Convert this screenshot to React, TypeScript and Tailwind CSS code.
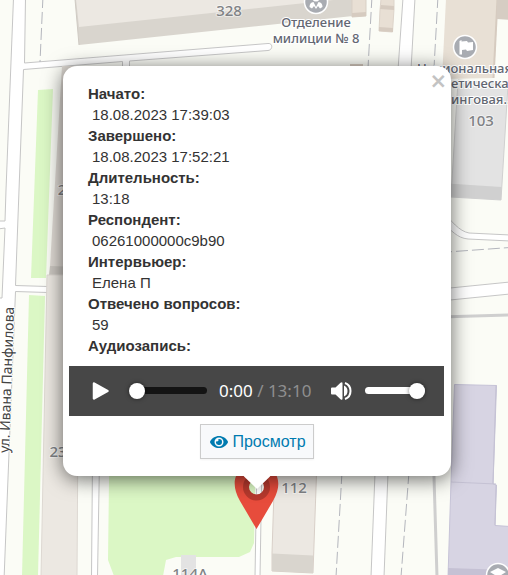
import React, { useState } from "react";
import { FaEye } from "react-icons/fa";

const details = [
  { label: 'Начато:', value: '18.08.2023 17:39:03' },
  { label: 'Завершено:', value: '18.08.2023 17:52:21' },
  { label: 'Длительность:', value: '13:18' },
  { label: 'Респондент:', value: '06261000000c9b90' },
  { label: 'Интервьюер:', value: 'Елена П' },
  { label: 'Отвечено вопросов:', value: '59' },
];

const MapTiles = () => (
  <svg className="absolute inset-0 h-full w-full" aria-label="Карта">
    {/* greenery */}
    <g fill="#dbf7c5">
      <path d="M38 90L53 89L46 278H31z" />
      <path d="M29 295L45 296L38 576H22z" />
      <path d="M110 400L108 560L114 576H163L166 560L176 557H239L250 552L254 543L257 400z" />
    </g>

    {/* roads */}
    <g fill="#fff" stroke="#c6c6c6">
      <path d="M13.500 -2L6 190L5 221L-2 221V229L5 228L2 298L-2 298V580H4L9 453L15.500 291.500L80 293.500V287.500L15.500 285.500L19 190L23.500 69.500L122.500 61.500V90H129.500V61L268 50.500C273 50 273 43 268 43.500L24.500 63L25.500 -2z" />
      <path d="M403 -2L398 70H411L415 -2z" />
      <path d="M92.500 460L91.500 577H97.500L99.500 460z" />
      <path d="M257 460L255 577H260L262 460z" />
      <path d="M375.500 460L371 577H384L388.500 460z" />
      <path d="M440 208C452 222 459 231 469 233L510 235V241L468 239C457 238 452 231 440 220z" />
      <path d="M440 289L510 282V294L440 301z" />
    </g>
    <path d="M440 317L510 315M433.500 460L437 577" stroke="#cfcfcf" strokeWidth="3" />
    <g stroke="#b4b6bd" strokeDasharray="12 4" fill="none">
      <path d="M43 -4L40 62" />
      <path d="M372 -4L368 68" />
      <path d="M438 -4L434 68" />
      <path d="M342 472L336 577" />
      <path d="M409 472L401 577" />
      <path d="M440 252.500L510 247.500" />
    </g>

    {/* buildings */}
    <path d="M75 -1L79 45L353 16V-1z" fill="#d9d5ce" />
    <path d="M76 -1L79 27L352 -2z" fill="#ece8e2" />
    <path d="M75 -1L79 45" stroke="#cfcac3" />
    <path d="M352 -1H366V16L352 17z" fill="#e8dfd4" stroke="#d8cfc5" />
    <path d="M352 13L366 12V16L352 17z" fill="#d6cbc0" />
    <path d="M381 -1H394V9L392.500 32L379 31L380 10z" fill="#e8dfd4" stroke="#ddd4ca" />
    <path d="M381 5L394 6V10L380 9zM379 27L393 28V32L379 31z" fill="#d6cbc0" />
    <path d="M350 64H363V76H350z" fill="#d6cbc0" />
    <path d="M446 -1H498L494 78L442 79z" fill="#e8e0d5" />
    <path d="M497.500 -1L493.500 78" stroke="#d6cbc0" strokeWidth="2" />
    <path d="M497 -1H510V20L497 19z" fill="#d6cdc3" />
    <path d="M458 80L508 85L501 200L451 197z" fill="#e3e3e3" stroke="#d0d0d0" />
    <path d="M440 183L501.500 187L501 200L440 196z" fill="#d0d0d0" />
    <path d="M62 66L50 266V276H80V66z" fill="#dfdad4" />
    <path d="M50 266L80 267V276L49 275z" fill="#cbc7c1" />
    <path d="M47 275H79L77 577H41z" fill="#ece8e2" stroke="#ddd8d2" />
    <path d="M181 555H196V577H181z" fill="#e3e3e3" />
    <path d="M275 460H317L313 573L272 571L272 553z" fill="#ece8e2" stroke="#d8cfc8" />
    <path d="M272 553.500L313 555.500V573L272 571z" fill="#d9d5ce" />
    <path d="M454.500 384.500L496.500 385.500L493 484L496.500 485L495 525.500L510 526.500V577H448L451 482z" fill="#d7d4e3" stroke="#c6c3d7" />
    <path d="M451 482L496 484M496 385L493 484M496 485L495 525" stroke="#c5c2d4" strokeWidth="1" />
    <path d="M448 568L510 570V577H448z" fill="#c5c1d4" />

    {/* places */}
    <g fill="#a9acb2" stroke="#fff" strokeWidth="1.500">
      <circle cx="316" cy="2" r="11.500" />
      <circle cx="465" cy="47" r="11.500" />
      <circle cx="498" cy="575" r="11.500" />
    </g>
    <g fill="#fff">
      <circle cx="316" cy="-2" r="3.500" />
      <path d="M309.500 7Q309.500 2.500 313.500 2L316 7L318.500 2Q322.500 2.500 322.500 7L320 8.500L318 6L316 9L314 6L312 8.500z" />
      <path d="M459.500 41L461.500 40V41.500L467 41L468 42.500L473 42V50L467 51L466 49.500L462 50V54.500H459.500z" />
      <path d="M490 572L498 568L506 572L498 577z" />
    </g>

    <g className="font-['Noto_Sans'] font-medium" fill="#808285" fontSize="15" textAnchor="middle" paintOrder="stroke" stroke="#ffffff80" strokeWidth="2">
      <text x="229" y="16">328</text>
      <text x="481" y="126">103</text>
      <text x="294" y="493">112</text>
      <text x="190" y="579">114А</text>
      <text x="58" y="457">23</text>
      <text x="62" y="195">2</text>
    </g>
    <g className="font-['Noto_Sans'] font-medium" fill="#636772" fontSize="13" paintOrder="stroke" stroke="#fff" strokeWidth="2">
      <text x="316" y="27" textAnchor="middle">Отделение</text>
      <text x="316" y="43" textAnchor="middle">милиции № 8</text>
      <text x="417" y="73">Национальная</text>
      <text x="451" y="88">етическая</text>
      <text x="451" y="104">инговая...</text>
    </g>
    <text className="font-['Noto_Sans']" fill="#444" fontSize="14" paintOrder="stroke" stroke="#fff" strokeWidth="2" transform="translate(9 453) rotate(-88)">ул. Ивана Панфилова</text>

    {/* marker */}
    <path
      d="M256.500 529L240 501C227 478 240 464 256.500 464S286 478 273 501zM256.500 479A8 8 0 0 0 256.500 495A8 8 0 0 0 256.500 479z"
      fill="#e74c3c"
      fillRule="evenodd"
    />
    <circle cx="256.500" cy="487" r="10.500" fill="none" stroke="#b6392d" strokeWidth="6" />
  </svg>
);

const AudioPlayer = () => {
  const [position, setPosition] = useState(0);
  const [volume, setVolume] = useState(100);
  const thumb = "appearance-none rounded-full [&::-webkit-slider-thumb]:size-4 [&::-webkit-slider-thumb]:appearance-none [&::-webkit-slider-thumb]:rounded-full [&::-webkit-slider-thumb]:bg-white [&::-webkit-slider-thumb]:shadow-[0_0_4px_#0008]";

  return (
    <div className="mr-[7px] ml-1.5 flex h-[50px] items-center bg-[#474747] pr-[19px] pb-px pl-[23px] text-white">
      <button type="button" aria-label="Воспроизвести">
        <svg className="block size-[18px]" viewBox="0 0 18 18">
          <path d="M2 1.500L15.500 9L2 16.500z" fill="currentColor" stroke="currentColor" strokeWidth="2.500" strokeLinejoin="round" />
        </svg>
      </button>
      <input
        type="range"
        aria-label="Позиция"
        className={"ml-[19px] h-[7px] w-[78px] bg-[#141414] " + thumb}
        value={position}
        onChange={e => setPosition(Number(e.target.value))}
      />
      <div className="ml-3 grow font-['Noto_Sans'] text-[17px] whitespace-nowrap">
        0:00 <span className="text-[#8f8f8f]">/ 13:10</span>
      </div>
      <button type="button" aria-label="Звук">
        <svg className="block h-[18px] w-[21px]" viewBox="0 0 21 18">
          <path d="M1 5.500H4.500L9.500 .8Q11.500 -.8 11.500 1.500V16.500Q11.500 18.800 9.500 17.200L4.500 12.500H1Q0 12.500 0 11.500V6.500Q0 5.500 1 5.500z" fill="currentColor" />
          <path d="M13 3.500V14.500Q16.500 13 16.500 9T13 3.500z" fill="currentColor" />
          <path d="M14 1Q19.500 3 19.500 9T14 17" fill="none" stroke="currentColor" strokeWidth="2" />
        </svg>
      </button>
      <input
        type="range"
        aria-label="Громкость"
        className={"ml-[13px] h-[7px] w-[60px] bg-white " + thumb}
        value={volume}
        onChange={e => setVolume(Number(e.target.value))}
      />
    </div>
  );
};

const App = () => {
  return (
    <main className="relative h-screen overflow-hidden bg-[#fbfcf6] font-['Liberation_Sans',sans-serif]">
      <MapTiles />
      <section className="absolute top-[66px] left-[63px] w-[388px] rounded-[14px] bg-white pt-[17px] pb-[17px] text-[15px] leading-[21px] text-[#333] shadow-[0_3px_20px_rgba(0,0,0,0.6)]">
        <button type="button" aria-label="Закрыть" className="absolute top-[5px] right-1 font-['DejaVu_Sans'] text-[21px] leading-5 font-bold text-[#c3c3c3]">
          ×
        </button>
        <dl className="pl-[25px]">
          {details.map(item => (
            <div key={item.label}>
              <dt className="font-bold">{item.label}</dt>
              <dd className="pl-1">{item.value}</dd>
            </div>
          ))}
          <dt className="font-bold">Аудиозапись:</dt>
        </dl>
        <div className="mt-2.5">
          <AudioPlayer />
        </div>
        <div className="mt-2 flex justify-center">
          <button type="button" className="flex h-[35px] items-center gap-1 border border-[#ccc] bg-[#f8f9fb] pr-[7px] pl-[9px] text-base text-[#007bb0] shadow-xs">
            <FaEye className="size-[18px]" />
            Просмотр
          </button>
        </div>
        <svg className="absolute top-full left-1/2 h-[13px] w-[27px] -translate-x-1/2" viewBox="0 0 27 13">
          <path d="M0 0H27L13.500 13z" fill="#fff" />
        </svg>
      </section>
    </main>
  );
};

export default App;
